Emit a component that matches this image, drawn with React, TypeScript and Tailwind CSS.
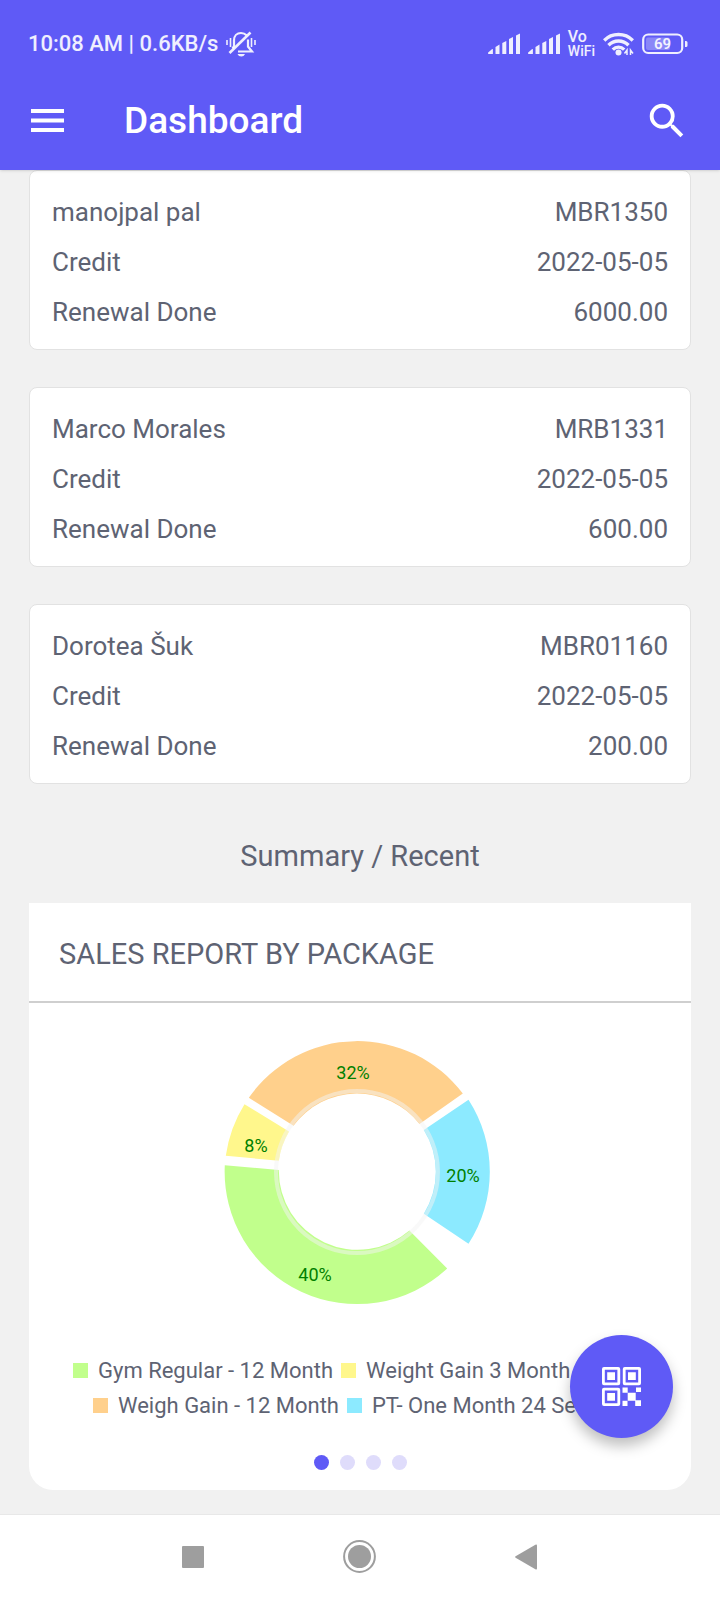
import { MdSearch } from 'react-icons/md';

interface Transaction {
  name: string;
  memberId: string;
  type: string;
  date: string;
  note: string;
  amount: string;
}

const transactions: Transaction[] = [
  { name: 'manojpal pal', memberId: 'MBR1350', type: 'Credit', date: '2022-05-05', note: 'Renewal Done', amount: '6000.00' },
  { name: 'Marco Morales', memberId: 'MRB1331', type: 'Credit', date: '2022-05-05', note: 'Renewal Done', amount: '600.00' },
  { name: 'Dorotea Šuk', memberId: 'MBR01160', type: 'Credit', date: '2022-05-05', note: 'Renewal Done', amount: '200.00' },
];

const slices = [
  { color: '#c1ff8c', label: '40%', x: -42, y: 109, d: 'M90.2 96.5A132.3 132.3 0 0 1 -132.2 -6.8L-78.2 -2.1A79 79 0 0 0 52.4 58.6Z' },
  { color: '#fff78c', label: '8%', x: -101, y: -20, d: 'M-131.2 -16.2A132.3 132.3 0 0 1 -112.5 -67.8L-68 -40.4A79 79 0 0 0 -78.2 -11.3Z' },
  { color: '#ffd08c', label: '32%', x: -4, y: -93, d: 'M-108.2 -74.2A132.3 132.3 0 0 1 105.8 -78.5L62.5 -47.9A79 79 0 0 0 -63.5 -46.3Z' },
  { color: '#8ceaff', label: '20%', x: 106, y: 10, d: 'M111.5 -72.2A132.3 132.3 0 0 1 111.5 71.8L66.8 41.7A79 79 0 0 0 66.8 -42Z' },
];

function SignalIcon() {
  return (
    <svg width="32" height="22" viewBox="0 0 32 22" fill="currentColor" aria-hidden="true">
      <path d="M1 21a1 1 0 0 1-.8-1.600l3.700-3.200a.6.6 0 0 1 1 .5V21z" />
      <path d="M7.500 14l4-2.500V21h-4zM14.300 10l4-2v13h-4zM21 6l4-2v17h-4zM28 2.500L32 .500V21H28z" />
    </svg>
  );
}

function MutedBellIcon() {
  return (
    <svg width="30" height="26" viewBox="0 0 30 26" fill="none" stroke="currentColor" strokeWidth="2.200" aria-hidden="true">
      <path d="M6.500 17.500L8 15V9.500C8 5 11 2 15 2c2.500 0 4.200.8 5.500 2.200M22 8.500V15.500L26 20.500H12" />
      <path d="M3.500 22L24.500 1.500" strokeWidth="2.600" />
      <path d="M1 9v5M4.500 7v9M25.500 7v9M29 9v5" strokeWidth="1.600" />
      <path d="M11.500 23h7.500c-.8 1.700-2 2.500-3.700 2.500S12.300 24.700 11.500 23z" fill="currentColor" stroke="none" />
    </svg>
  );
}

function WifiIcon() {
  return (
    <svg width="31" height="24" viewBox="0 0 31 24" fill="none" stroke="currentColor" strokeWidth="3.400" aria-hidden="true">
      <path d="M1.200 8.500C9 .500 22 .500 29.800 8.500M5.500 13.300C11 7.600 20 7.600 25.500 13.300M9.800 17.600c3.300-3.300 8.100-3.300 11.400 0" />
      <circle cx="15.500" cy="20.500" r="3" fill="currentColor" stroke="none" />
      <path d="M24 23v-5l-2.500 3.500M27.500 23v-5l2.500 3.500" strokeWidth="1.500" />
    </svg>
  );
}

function BatteryIcon() {
  return (
    <svg width="46" height="22" viewBox="0 0 46 22" aria-hidden="true">
      <rect x="1.200" y="1.500" width="39" height="18.500" rx="5" fill="none" stroke="currentColor" strokeWidth="2.200" />
      <rect x="4" y="4.500" width="24" height="12.500" rx="2" fill="currentColor" opacity="0.3" />
      <path d="M43 8h1a1.500 1.500 0 0 1 1.500 1.500v3A1.500 1.500 0 0 1 44 14h-1z" fill="currentColor" />
      <text x="20.500" y="16" textAnchor="middle" fontSize="15" fontWeight="600" fill="currentColor">69</text>
    </svg>
  );
}

function QrIcon() {
  return (
    <svg width="39" height="39" viewBox="0 0 39 39" fill="currentColor" aria-hidden="true">
      <g fill="none" stroke="currentColor" strokeWidth="2.800">
        <rect x="1.400" y="1.400" width="15.400" height="15.400" rx=".6" />
        <rect x="22.200" y="1.400" width="15.400" height="15.400" rx=".6" />
        <rect x="1.400" y="22.200" width="15.400" height="15.400" rx=".6" />
      </g>
      <path d="M5.200 5.200h7.800v7.800H5.200zM26 5.200h7.800v7.800H26zM5.200 26h7.800v7.800H5.200z" />
      <path d="M20.500 20.500h5.200v5.200h-5.200zM34 20.500h5v4.500h-5zM25.700 25.700h8v8h-8zM20.500 33.700h5v5.300h-5zM33.200 33.200h5.800v5.800h-5.800z" />
    </svg>
  );
}

function StatusBar() {
  return (
    <div className="flex h-[87px] items-center justify-between pr-8 pl-7 text-white/90">
      <div className="flex items-center gap-2">
        <span className="text-[22px] font-medium">10:08 AM | 0.6KB/s</span>
        <MutedBellIcon />
      </div>
      <div className="flex items-center gap-2">
        <SignalIcon />
        <SignalIcon />
        <div className="font-medium">
          <div className="text-[16px] leading-[14px]">Vo</div>
          <div className="text-[14px] leading-[14px]">WiFi</div>
        </div>
        <WifiIcon />
        <BatteryIcon />
      </div>
    </div>
  );
}

function TransactionCard({ item }: { item: Transaction }) {
  const rows = [
    [item.name, item.memberId],
    [item.type, item.date],
    [item.note, item.amount],
  ];

  return (
    <article className="rounded-lg border border-[#e2e2e2] bg-white px-[22px] pt-4 pb-3">
      {rows.map(([left, right]) => (
        <div key={left} className="flex h-[50px] items-center justify-between text-[26px]">
          <span>{left}</span>
          <span>{right}</span>
        </div>
      ))}
    </article>
  );
}

function DonutChart() {
  return (
    <svg width="274" height="268" viewBox="-134 -134 274 268" role="img" aria-label="Sales by package" className="mx-auto">
      {slices.map((slice) => (
        <path key={slice.label} d={slice.d} fill={slice.color} />
      ))}
      <circle r="81" fill="none" stroke="#f4f4f4" strokeOpacity="0.5" strokeWidth="4" />
      {slices.map((slice) => (
        <text key={slice.label} x={slice.x} y={slice.y} textAnchor="middle" fontSize="18" fill="#008000">
          {slice.label}
        </text>
      ))}
    </svg>
  );
}

function LegendItem({ swatch, label }: { swatch: string; label: string }) {
  return (
    <li className="flex items-center gap-2.5 whitespace-nowrap">
      <span className={`h-[15px] w-[15px] ${swatch}`} />
      {label}
    </li>
  );
}

export default function App() {
  return (
    <div className="relative flex min-h-screen flex-col bg-[#f1f1f1] font-[Roboto,sans-serif] text-[#5e6373]">
      <header className="z-10 bg-[#5f5af6] text-white shadow-sm">
        <StatusBar />
        <div className="flex h-[83px] items-center pb-[15px] pr-[30px] pl-[31px]">
          <button type="button" aria-label="Open menu">
            <svg width="33" height="24" viewBox="0 0 33 24" fill="currentColor" aria-hidden="true">
              <path d="M0 0h33v4H0zM0 9.500h33v4H0zM0 19h33v4H0z" />
            </svg>
          </button>
          <h1 className="ml-[60px] flex-1 text-[37px] font-medium">Dashboard</h1>
          <button type="button" aria-label="Search">
            <MdSearch size={46} />
          </button>
        </div>
      </header>

      <main className="flex-1 px-[29px] pb-6">
        <div className="flex flex-col gap-[37px]">
          {transactions.map((item) => (
            <TransactionCard key={item.memberId} item={item} />
          ))}
        </div>

        <h2 className="pt-[52px] pb-[27px] text-center text-[29px] leading-[40px]">Summary / Recent</h2>

        <section className="rounded-b-3xl bg-white">
          <h3 className="border-b-2 border-[#cfcfcf] px-[30px] pt-[30px] pb-[26px] text-[29px] leading-[42px]">SALES REPORT BY PACKAGE</h3>
          <div className="pt-[35px]">
            <DonutChart />
          </div>
          <div className="mt-[47px] flex flex-col pl-11 text-[22px] leading-[35px]">
            <ul className="flex gap-2">
              <LegendItem swatch="bg-[#c1ff8c]" label="Gym Regular - 12 Month" />
              <LegendItem swatch="bg-[#fff78c]" label="Weight Gain 3 Month" />
            </ul>
            <ul className="flex gap-2 pl-5">
              <LegendItem swatch="bg-[#ffd08c]" label="Weigh Gain - 12 Month" />
              <LegendItem swatch="bg-[#8ceaff]" label="PT- One Month 24 Se" />
            </ul>
          </div>
          <div className="flex justify-center gap-[11px] pt-8 pb-5">
            <button type="button" aria-label="Page 1" className="h-[15px] w-[15px] rounded-full bg-[#5f5af6]" />
            <button type="button" aria-label="Page 2" className="h-[15px] w-[15px] rounded-full bg-[#dfdcfb]" />
            <button type="button" aria-label="Page 3" className="h-[15px] w-[15px] rounded-full bg-[#dfdcfb]" />
            <button type="button" aria-label="Page 4" className="h-[15px] w-[15px] rounded-full bg-[#dfdcfb]" />
          </div>
        </section>
      </main>

      <button
        type="button"
        aria-label="Scan QR code"
        className="absolute right-[47px] bottom-[162px] flex h-[103px] w-[103px] items-center justify-center rounded-full bg-[#5f5af6] text-white shadow-[0_8px_14px_rgba(0,0,0,0.25)]"
      >
        <QrIcon />
      </button>

      <nav className="flex h-[86px] items-center justify-center gap-[139px] border-t border-[#e8e8e8] bg-white pr-[2px] pb-[2px] text-[#9e9e9e]">
        <button type="button" aria-label="Recent apps">
          <svg width="22" height="22" fill="currentColor" aria-hidden="true">
            <rect width="22" height="22" rx="1" />
          </svg>
        </button>
        <button type="button" aria-label="Home">
          <svg width="33" height="33" viewBox="0 0 33 33" aria-hidden="true">
            <circle cx="16.500" cy="16.500" r="15.400" fill="none" stroke="currentColor" strokeWidth="2" />
            <circle cx="16.500" cy="16.500" r="11.500" fill="currentColor" />
          </svg>
        </button>
        <button type="button" aria-label="Back">
          <svg width="22" height="26" viewBox="0 0 22 26" fill="currentColor" aria-hidden="true">
            <path d="M.6 12.300L20.400.800Q22 0 22 1.800v22.400Q22 26 20.400 25.200L.6 13.700Q-.4 13 .6 12.300z" />
          </svg>
        </button>
      </nav>
    </div>
  );
}
